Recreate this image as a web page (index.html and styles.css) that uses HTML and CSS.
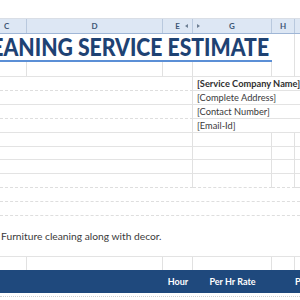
FILE: index.html
```
<!DOCTYPE html>
<html>
<head>
<meta charset="utf-8">
<link rel="stylesheet" href="styles.css">
</head>
<body>
<div class="sheet">
  <div class="topbar"></div>
  <div class="colhead">
    <div class="hc hc-c">C</div>
    <div class="hc">D</div>
    <div class="hc hc-e">E<span class="arr arr-l"></span></div>
    <div class="hc hc-g"><span class="arr arr-r"></span>G</div>
    <div class="hc">H</div>
    <div class="hc hc-last"></div>
  </div>

  <div class="title-row">
    <div class="title-cell"><span class="title">CLEANING SERVICE ESTIMATE</span></div>
    <div class="c v"></div>
    <div class="c"></div>
  </div>

  <div class="row h15 grid6 solid">
    <div class="c v"></div><div class="c v"></div><div class="c v"></div><div class="c v"></div><div class="c v"></div><div class="c"></div>
  </div>

  <div class="row h14 split">
    <div class="c left dashed v"></div>
    <div class="c right solid"><span class="txt bold">[Service Company Name]</span></div>
  </div>
  <div class="row h14 split">
    <div class="c left solid v"></div>
    <div class="c right solid"><span class="txt">[Complete Address]</span></div>
  </div>
  <div class="row h14 split">
    <div class="c left dashed v"></div>
    <div class="c right solid"><span class="txt">[Contact Number]</span></div>
  </div>
  <div class="row h14 split">
    <div class="c left solid v"></div>
    <div class="c right solid"><span class="txt">[Email-Id]</span></div>
  </div>

  <div class="row h14 grid4 solid">
    <div class="c v"></div><div class="c v"></div><div class="c v"></div><div class="c"></div>
  </div>
  <div class="row h13 grid4 solid">
    <div class="c v"></div><div class="c v"></div><div class="c v"></div><div class="c"></div>
  </div>
  <div class="row h14 grid4 solid">
    <div class="c v"></div><div class="c v"></div><div class="c v"></div><div class="c"></div>
  </div>
  <div class="row h14 grid4 dashed">
    <div class="c v"></div><div class="c v"></div><div class="c v"></div><div class="c"></div>
  </div>

  <div class="row h14 full dashed"><div class="c"></div></div>
  <div class="row h14 full dashed"><div class="c"></div></div>

  <div class="row h41 full solid">
    <div class="c desc"><span class="txt">Furniture cleaning along with decor.</span></div>
  </div>

  <div class="row h13 grid6 none">
    <div class="c v"></div><div class="c v"></div><div class="c v"></div><div class="c v"></div><div class="c v"></div><div class="c"></div>
  </div>

  <div class="band">
    <div class="bc"></div>
    <div class="bc"></div>
    <div class="bc center">Hour</div>
    <div class="bc center">Per Hr Rate</div>
    <div class="bc"></div>
    <div class="bc left-txt">Price</div>
  </div>

  <div class="row tail"></div>
</div>
</body>
</html>
```
FILE: styles.css
```
* { box-sizing: border-box; }
html, body { margin: 0; padding: 0; background: #ffffff; }
body { font-family: Lato, "Open Sans", sans-serif; }

.sheet {
  width: 300px;
  height: 300px;
  overflow: hidden;
  background: #fff;
}

.topbar {
  height: 19px;
  border-bottom: 1px solid #d9dee6;
}

.colhead {
  display: grid;
  grid-template-columns: 27px 136px 30px 79px 23px 1fr;
  height: 15px;
  background: #dde7f4;
  border-bottom: 1px solid #9fb6d6;
}
.hc {
  position: relative;
  border-right: 1px solid #b9c9de;
  font-size: 8px;
  font-weight: 700;
  color: #3d5675;
  display: flex;
  align-items: center;
  justify-content: center;
  line-height: 1;
}
.hc-c { justify-content: flex-start; padding-left: 4px; }
.hc-last { border-right: 0; }
.arr {
  position: absolute;
  top: 5px;
  width: 0;
  height: 0;
  border-top: 2px solid transparent;
  border-bottom: 2px solid transparent;
}
.arr-l { right: 4px; border-right: 3px solid #6d7f94; }
.arr-r { left: 4px; border-left: 3px solid #6d7f94; }

.title-row {
  display: grid;
  grid-template-columns: 272px 23px 1fr;
  height: 28px;
}
.title-cell {
  display: flex;
  justify-content: flex-end;
  align-items: flex-end;
  overflow: hidden;
  white-space: nowrap;
  border-bottom: 2px solid #5b8fd6;
  padding-right: 3px;
}
.title {
  font-size: 24.5px;
  font-weight: 900;
  color: #1e4273;
  line-height: 26px;
  transform: scaleX(0.865);
  transform-origin: right bottom;
}

.row { display: grid; }
.h13 { height: 13px; }
.h14 { height: 14px; }
.h15 { height: 15px; }
.h41 { height: 41px; }
.grid6 { grid-template-columns: 27px 136px 30px 79px 23px 1fr; }
.grid4 { grid-template-columns: 193px 79px 23px 1fr; }
.split { grid-template-columns: 193px 1fr; }
.full { grid-template-columns: 1fr; }

.c { min-width: 0; display: flex; align-items: center; white-space: nowrap; overflow: visible; }
.v { border-right: 1px solid #e1e1e1; }

.solid > .c, .c.solid { border-bottom: 1px solid #e3e3e3; }
.dashed > .c, .c.dashed { border-bottom: 1px dashed #dedede; }
.none > .c { border-bottom: 0; }

.txt {
  font-size: 9.25px;
  color: #3a3a3a;
  padding-left: 4px;
}
.bold { font-weight: 700; color: #2f2f2f; }

.desc .txt { font-size: 10.25px; padding-left: 1px; }

.band {
  display: grid;
  grid-template-columns: 27px 136px 30px 79px 23px 1fr;
  height: 23px;
  background: #1f497d;
}
.bc {
  display: flex;
  align-items: center;
  color: #fff;
  font-size: 9px;
  font-weight: 700;
  white-space: nowrap;
  overflow: visible;
}
.center { justify-content: center; }
.left-txt { padding-left: 0; }

.tail {
  height: 4px;
  border-bottom: 1px dotted #d0d0d0;
}
```
